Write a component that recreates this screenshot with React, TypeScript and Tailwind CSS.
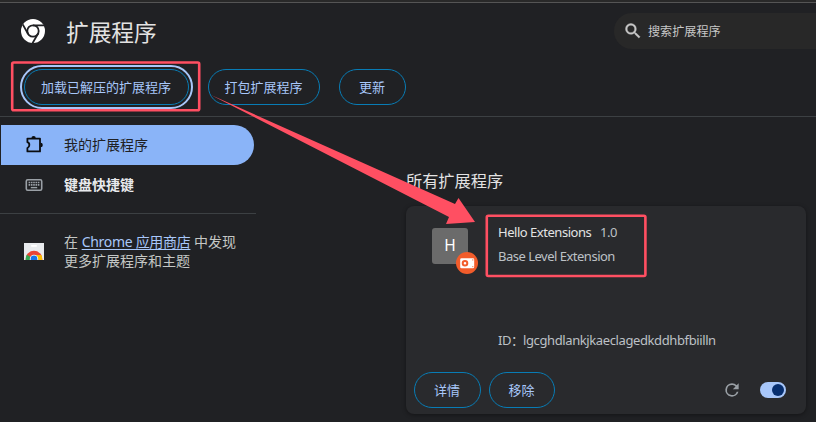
import React from "react";

const FONT = "font-['Noto_Sans','Noto_Sans_CJK_SC',sans-serif]";

function ChromeMark() {
  return (
    <svg className="h-6 w-6 shrink-0" viewBox="0 0 24 24">
      <circle cx="12" cy="12" r="12" fill="#fff" />
      <circle cx="12" cy="12" r="5.7" fill="#fff" stroke="#202124" strokeWidth="1.8" />
      <path d="M12 6.3H23M7 14.8L1.7 5.4M17 14.8L11.5 24.2" stroke="#202124" strokeWidth="1.8" fill="none" />
    </svg>
  );
}

function PuzzleIcon() {
  return (
    <svg className="h-5 w-5" viewBox="0 0 20 20" fill="none">
      <path d="M3.4 3.6H16V16.4H3.4V13C6 12.2 6 7.9 3.4 7.2Z" stroke="#0b0d10" strokeWidth="1.8" strokeLinejoin="round" />
      <path d="M7.4 3.2a2.2 2.2 0 0 1 4.4 0ZM16.6 7.8a2.2 2.2 0 0 1 0 4.4Z" fill="#0b0d10" />
    </svg>
  );
}

function KeyboardIcon() {
  return (
    <svg className="h-5 w-5" viewBox="0 0 20 20" fill="none">
      <rect x="2.3" y="4.8" width="15.4" height="10.4" rx="1.4" stroke="#9aa0a6" strokeWidth="1.6" />
      <path d="M4.6 7.5h11M4.6 9.9h11" stroke="#9aa0a6" strokeWidth="1.6" strokeDasharray="1.6 .7" />
      <path d="M6.8 12.6h6.4" stroke="#9aa0a6" strokeWidth="1.4" />
    </svg>
  );
}

function StoreIcon() {
  return (
    <svg className="mt-px h-[17px] w-5" viewBox="0 0 20 17">
      <defs>
        <clipPath id="bag"><rect width="20" height="17" /></clipPath>
      </defs>
      <rect width="20" height="17" fill="#e8eaed" />
      <rect x="7" y="2" width="6" height="1.7" rx=".8" fill="#fff" />
      <g clipPath="url(#bag)">
        <circle cx="10" cy="16" r="8.3" fill="#ea4335" />
        <path d="M10 16L2.8 11.8A8.3 8.3 0 0 0 1.7 17H10Z" fill="#34a853" />
        <path d="M10 12H17.3A8.3 8.3 0 0 1 18.3 17H10Z" fill="#fbbc04" />
        <circle cx="10" cy="16" r="4.2" fill="#fff" />
        <circle cx="10" cy="16" r="3.4" fill="#1a73e8" />
      </g>
    </svg>
  );
}

function PillButton({ children, className }: { children: React.ReactNode; className: string }) {
  return (
    <button className={`flex h-9 shrink-0 items-center justify-center whitespace-nowrap rounded-full border border-[#087cb5] pr-px text-[13px] leading-none text-[#a8c7fa] ${className}`}>
      {children}
    </button>
  );
}

function Header() {
  return (
    <header className="flex h-[59px] items-start justify-between">
      <div className="flex items-start pl-[21px] pt-4">
        <ChromeMark />
        <h1 className="-mt-[3px] ml-[21px] text-[22.7px] leading-[34px] text-[#e3e3e3]">扩展程序</h1>
      </div>
      <div className="mt-[10px] flex h-9 w-[202px] items-center rounded-l-full bg-[#282828] pl-[9px]">
        <svg className="h-5 w-5" viewBox="0 0 24 24" fill="#c7c7c7" stroke="#c7c7c7" strokeWidth=".5">
          <path d="M15.5 14h-.79l-.28-.27A6.47 6.47 0 0 0 16 9.5 6.5 6.5 0 1 0 9.5 16c1.61 0 3.09-.59 4.23-1.57l.27.28v.79l5 4.99L20.49 19l-4.99-5zm-6 0C7.01 14 5 11.99 5 9.5S7.01 5 9.5 5 14 7.01 14 9.5 11.99 14 9.5 14z" />
        </svg>
        <span className="ml-[5px] mt-0.5 text-[12.1px] leading-4 text-[#c7c7c7]">搜索扩展程序</span>
      </div>
    </header>
  );
}

function Toolbar() {
  return (
    <div className="flex h-[55px] items-start border-b border-[#3c4043] pl-6 pt-[7px]">
      <PillButton className="w-[165px] outline-2 outline-offset-2 outline-[#a8c7fa]">加载已解压的扩展程序</PillButton>
      <PillButton className="ml-[19px] w-28">打包扩展程序</PillButton>
      <PillButton className="ml-[19px] w-[67px]">更新</PillButton>
    </div>
  );
}

function Sidebar() {
  return (
    <nav className="w-64 shrink-0 pt-2 text-sm">
      <div className="ml-px flex h-10 w-[253px] items-center rounded-r-full bg-[#8ab4f8] pl-[23px] text-[#202124]">
        <PuzzleIcon />
        <span className="ml-5">我的扩展程序</span>
      </div>
      <div className="flex h-10 items-center pl-6 font-bold text-[#e8eaed]">
        <KeyboardIcon />
        <span className="ml-5">键盘快捷键</span>
      </div>
      <div className="mt-2 border-t border-[#3c4043]" />
      <div className="flex items-center pl-6 pt-[18px]">
        <StoreIcon />
        <p className="ml-5 whitespace-nowrap leading-[19px] text-[#c4c7c5]">
          在 <a className="tracking-[-0.3px] text-[#a8c7fa] underline underline-offset-2">Chrome 应用商店</a> 中发现
          <br />
          更多扩展程序和主题
        </p>
      </div>
    </nav>
  );
}

function Avatar() {
  return (
    <div className="relative ml-[26px] mt-[22px] flex h-9 w-9 shrink-0 items-center justify-center rounded-[3px] bg-[#6b6b6b] text-[15.5px] text-white">
      H
      <svg className="absolute -bottom-[10px] -right-[10px] h-[22px] w-[22px]" viewBox="0 0 22 22">
        <circle cx="11" cy="11" r="11" fill="#f25c2b" />
        <rect x="4.2" y="6.2" width="14" height="10" rx="1.3" fill="#fff" />
        <circle cx="9" cy="11.2" r="2.3" fill="none" stroke="#f25c2b" strokeWidth="2" />
        <path d="M16.8 7.2v1.4M16.8 14v1.2" stroke="#f25c2b" strokeWidth=".8" />
      </svg>
    </div>
  );
}

function ExtensionCard() {
  return (
    <article className="mt-[13px] flex h-[208px] w-[400px] flex-col rounded-lg bg-[#292a2d] shadow-[0_1px_4px_rgba(0,0,0,0.4)]">
      <div className="flex h-[158px]">
        <Avatar />
        <div className="ml-[30px] flex flex-col whitespace-nowrap pt-4 text-[13px] leading-5 text-[#bdc1c6]">
          <div className="flex">
            <span className="w-[102px] tracking-[-0.47px] text-[#e3e3e3]">Hello Extensions</span>
            <span className="tracking-[-0.5px]">1.0</span>
          </div>
          <div className="mt-1 tracking-[-0.5px]">Base Level Extension</div>
          <div className="mt-16 flex tracking-[-0.39px]">
            <span className="w-[25px]">ID：</span>
            <span>lgcghdlankjkaeclagedkddhbfbiilln</span>
          </div>
        </div>
      </div>
      <div className="flex items-center pl-2 pt-2">
        <PillButton className="w-[67px]">详情</PillButton>
        <PillButton className="ml-2 w-[66px]">移除</PillButton>
        <svg className="ml-[167px] h-5 w-5" viewBox="0 0 24 24" fill="#9aa0a6">
          <path d="M17.65 6.35A7.96 7.96 0 0 0 12 4a8 8 0 1 0 7.73 10h-2.08A6 6 0 1 1 12 6c1.66 0 3.14.69 4.22 1.78L13 11h7V4l-2.35 2.35z" />
        </svg>
        <div className="ml-[18px] flex h-4 w-[26px] items-center justify-end rounded-full bg-[#a8c7fa] pr-0.5">
          <div className="h-3 w-3 rounded-full bg-[#062e6f]" />
        </div>
      </div>
    </article>
  );
}

export default function App() {
  return (
    <div className={`relative h-[422px] w-[816px] overflow-hidden bg-[#202124] ${FONT}`}>
      <div className="h-[3px] border-b border-[#555555] bg-[#292929]" />
      <Header />
      <Toolbar />
      <div className="flex">
        <Sidebar />
        <main className="ml-[150px] pt-[52px]">
          <h2 className="text-[16.2px] leading-[24px] text-[#e3e3e3]">所有扩展程序</h2>
          <ExtensionCard />
        </main>
      </div>
      <svg className="pointer-events-none absolute inset-0 h-full w-full" viewBox="0 0 816 422" fill="none">
        <rect x="12.2" y="62.5" width="187" height="47.7" rx="1.5" stroke="#ff4f62" strokeWidth="2.6" />
        <rect x="486.8" y="215.8" width="158.6" height="60.2" rx="1.5" stroke="#ff4f62" strokeWidth="2.6" />
        <path d="M211 95L455 204L458.5 198L475 222L446 224L449 217Z" fill="#ff4f62" />
      </svg>
    </div>
  );
}
